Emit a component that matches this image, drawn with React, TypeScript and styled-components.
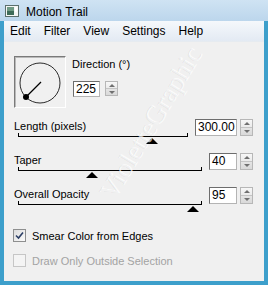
import React from 'react';
import styled, {createGlobalStyle} from 'styled-components';

const GlobalStyle = createGlobalStyle`
  html, body {
    margin: 0;
    padding: 0;
    background: #ffffff;
  }
  body {
    font-family: "Liberation Sans", Arial, sans-serif;
  }
`;

const sliders = [
  {label: 'Length (pixels)', value: '300.00', fraction: 0.79, boxWidth: 42},
  {label: 'Taper', value: '40', fraction: 0.4, boxWidth: 28},
  {label: 'Overall Opacity', value: '95', fraction: 0.95, boxWidth: 28},
];

const menus = ['Edit', 'Filter', 'View', 'Settings', 'Help'];

const Spin = ({height}: {height: number}) => (
  <Spinner $h={height}>
    <SpinHalf>
      <ArrowUp />
    </SpinHalf>
    <SpinHalf $bottom>
      <ArrowDown />
    </SpinHalf>
  </Spinner>
);

const App = () => {
  return (
    <>
      <GlobalStyle />
      <Window>
        <TitleBar>
          <svg width="14" height="12" viewBox="0 0 14 12">
            <rect x="0.5" y="0.5" width="13" height="11" fill="#f4f6f4" stroke="#5b6f6c" />
            <rect x="2" y="2" width="7" height="8" fill="#6f9a84" />
            <rect x="2" y="6" width="7" height="4" fill="#3e6b58" />
            <rect x="10" y="2" width="2" height="5" fill="#ffffff" />
          </svg>
          <Title>Motion Trail</Title>
        </TitleBar>
        <Client>
          <MenuBar>
            {menus.map(m => (
              <MenuItem key={m}>{m}</MenuItem>
            ))}
          </MenuBar>
          <Body>
            <DirRow>
              <DialBox>
                <svg width="50" height="50" viewBox="0 0 50 50">
                  <circle cx="25" cy="26" r="20" fill="none" stroke="#2b2b2b" strokeWidth="1" />
                  <line x1="11" y1="40" x2="26" y2="25" stroke="#000" strokeWidth="1.2" />
                  <circle cx="11" cy="40" r="3" fill="#000" />
                </svg>
              </DialBox>
              <DirSide>
                <Label>Direction (°)</Label>
                <InputLine>
                  <NumBox $w={27} $h={16}>225</NumBox>
                  <SpinGap>
                    <Spin height={15} />
                  </SpinGap>
                </InputLine>
              </DirSide>
            </DirRow>

            {sliders.map(s => (
              <SliderRow key={s.label}>
                <SliderMain>
                  <Label>{s.label}</Label>
                  <Track>
                    <Thumb style={{left: `${s.fraction * 100}%`}} />
                  </Track>
                </SliderMain>
                <NumBox $w={s.boxWidth} $h={17}>
                  {s.value}
                </NumBox>
                <SpinGap $small>
                  <Spin height={17} />
                </SpinGap>
              </SliderRow>
            ))}

            <CheckRow>
              <CheckBox>
                <svg width="9" height="9" viewBox="0 0 9 9">
                  <path d="M1 4.5 L3.5 7 L8 1.5" fill="none" stroke="#2c3f66" strokeWidth="1.6" />
                </svg>
              </CheckBox>
              <CheckText>Smear Color from Edges</CheckText>
            </CheckRow>
            <CheckRow>
              <CheckBox $disabled />
              <CheckText $disabled>Draw Only Outside Selection</CheckText>
            </CheckRow>
          </Body>
          <Watermark>VioletteGraphic</Watermark>
        </Client>
      </Window>
    </>
  );
};

const Window = styled.div`
  width: 268px;
  height: 285px;
  background: #3d9fcb;
  display: flex;
  flex-direction: column;
  overflow: hidden;
`;

const TitleBar = styled.div`
  height: 21px;
  display: flex;
  align-items: center;
  gap: 7px;
  padding-left: 5px;
  background: linear-gradient(#cfe3f3, #bcd6ec);
`;

const Title = styled.span`
  font-size: 12px;
  color: #000;
  position: relative;
  top: 1px;
`;

const Client = styled.div`
  position: relative;
  flex: 1;
  margin: 0 4px 4px;
  background: #f0f0f0;
  display: flex;
  flex-direction: column;
  overflow: hidden;
`;

const MenuBar = styled.div`
  height: 20px;
  display: flex;
  align-items: center;
  gap: 13px;
  padding-left: 6px;
  background: linear-gradient(#f5f8fb, #e3eaf3);
  border-bottom: 1px solid #e6ebf0;
`;

const MenuItem = styled.span`
  font-size: 12px;
  color: #000;
`;

const Body = styled.div`
  display: flex;
  flex-direction: column;
  padding: 14px 11px 0 10px;
  font-size: 11px;
  color: #000;
`;

const DirRow = styled.div`
  display: flex;
  gap: 6px;
  height: 52px;
  margin-bottom: 11px;
`;

const DialBox = styled.div`
  width: 52px;
  height: 52px;
  box-sizing: border-box;
  border: 1px solid;
  border-color: #7a7a7a #ffffff #ffffff #7a7a7a;
  box-shadow: inset 1px 1px 0 #b9b9b9;
  background: #f0f0f0;
`;

const DirSide = styled.div`
  display: flex;
  flex-direction: column;
  padding-top: 2px;
`;

const Label = styled.div`
  font-size: 11px;
  line-height: 13px;
  height: 13px;
  white-space: nowrap;
`;

const InputLine = styled.div`
  display: flex;
  align-items: flex-start;
  margin-top: 10px;
  margin-left: 1px;
`;

const NumBox = styled.div<{$w: number; $h: number}>`
  width: ${({$w}) => $w}px;
  height: ${({$h}) => $h}px;
  box-sizing: border-box;
  border: 1px solid;
  border-color: #6d6d6d #b4b4b4 #b4b4b4 #6d6d6d;
  background: #ffffff;
  font-size: 12px;
  line-height: ${({$h}) => $h - 2}px;
  padding-left: 2px;
  overflow: hidden;
`;

const SpinGap = styled.div<{$small?: boolean}>`
  margin-left: ${({$small}) => ($small ? 3 : 5)}px;
`;

const Spinner = styled.div<{$h: number}>`
  width: 13px;
  height: ${({$h}) => $h}px;
  box-sizing: border-box;
  border: 1px solid #b7b7b7;
  display: flex;
  flex-direction: column;
  background: #f2f2f2;
`;

const SpinHalf = styled.div<{$bottom?: boolean}>`
  flex: 1;
  display: flex;
  align-items: center;
  justify-content: center;
  background: ${({$bottom}) =>
    $bottom ? 'linear-gradient(#e4e4e4, #d9d9d9)' : 'linear-gradient(#f7f7f7, #ebebeb)'};
  border-top: ${({$bottom}) => ($bottom ? '1px solid #c4c4c4' : 'none')};
`;

const ArrowUp = styled.div`
  width: 0;
  height: 0;
  border-left: 3px solid transparent;
  border-right: 3px solid transparent;
  border-bottom: 3px solid #707070;
`;

const ArrowDown = styled.div`
  width: 0;
  height: 0;
  border-left: 3px solid transparent;
  border-right: 3px solid transparent;
  border-top: 3px solid #707070;
`;

const SliderRow = styled.div`
  display: flex;
  align-items: flex-start;
  height: 34px;
`;

const SliderMain = styled.div`
  flex: 1;
  padding-top: 1px;
  margin-right: 7px;
`;

const Track = styled.div`
  position: relative;
  margin: 3px 0 0 4px;
  height: 1px;
  background: #000;

  &::before,
  &::after {
    content: '';
    position: absolute;
    bottom: 0;
    width: 1px;
    height: 4px;
    background: #000;
  }
  &::before {
    left: 0;
  }
  &::after {
    right: 0;
  }
`;

const Thumb = styled.div`
  position: absolute;
  top: 2px;
  width: 0;
  height: 0;
  transform: translateX(-6px);
  border-left: 6px solid transparent;
  border-right: 6px solid transparent;
  border-bottom: 6px solid #000;
`;

const CheckRow = styled.div`
  display: flex;
  align-items: center;
  gap: 6px;
  height: 25px;
  margin-top: 2px;
  margin-left: -1px;
  margin-bottom: -2px;
`;

const CheckBox = styled.div<{$disabled?: boolean}>`
  width: 13px;
  height: 13px;
  box-sizing: border-box;
  border: 1px solid ${({$disabled}) => ($disabled ? '#c6c6c6' : '#8e8f8f')};
  background: ${({$disabled}) =>
    $disabled ? '#f4f4f4' : 'linear-gradient(135deg, #dcdcdc, #fbfbfb)'};
  display: flex;
  align-items: center;
  justify-content: center;
`;

const CheckText = styled.span<{$disabled?: boolean}>`
  font-size: 11px;
  color: ${({$disabled}) => ($disabled ? '#a3a3a3' : '#000')};
`;

const Watermark = styled.div`
  position: absolute;
  left: 46px;
  top: 88px;
  width: 200px;
  height: 28px;
  line-height: 28px;
  text-align: center;
  font-family: "Liberation Serif", serif;
  font-size: 27px;
  color: rgba(0, 0, 0, 0.05);
  text-shadow: 1px 1px 0 rgba(255, 255, 255, 0.7);
  transform: rotate(-59deg);
  transform-origin: center;
  white-space: nowrap;
  pointer-events: none;
`;

export default App;
